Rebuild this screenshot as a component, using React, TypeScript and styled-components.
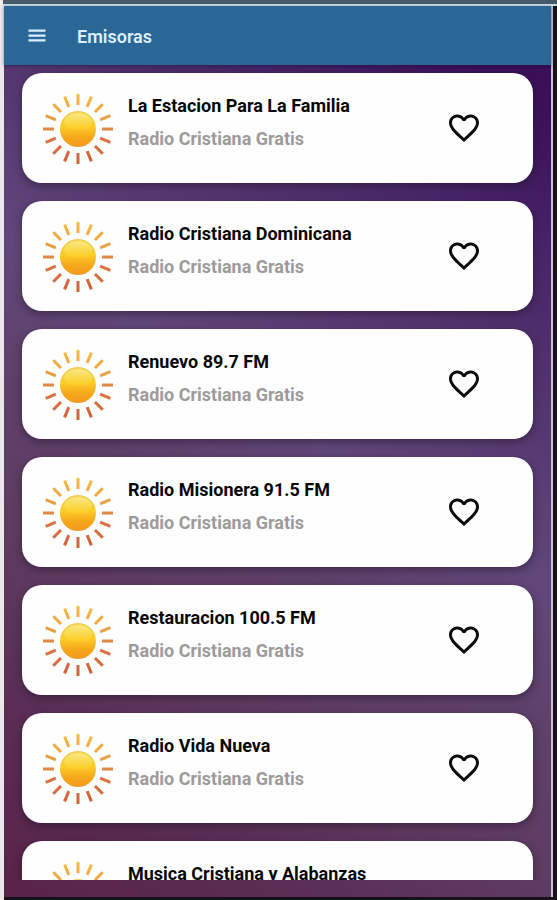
import React, { useState } from "react";
import styled, { createGlobalStyle } from "styled-components";

const GlobalStyle = createGlobalStyle`
  *, *::before, *::after { box-sizing: border-box; }
  body {
    margin: 0;
    background: #0c0710;
    font-family: Roboto, "Liberation Sans", sans-serif;
  }
`;

const Frame = styled.div`
  display: flex;
  flex-direction: column;
  height: 100vh;
  overflow: hidden;
  padding-bottom: 3px;
  background: linear-gradient(to right, #ebe8ec 4px, #141216 4px);
`;

const StatusBar = styled.div`
  flex: none;
  height: 6px;
  margin-left: 3px;
  background: #46596a;
  border-bottom: 2px solid #c9dbe6;
`;

const Screen = styled.div`
  flex: 1;
  min-height: 0;
  display: flex;
  flex-direction: column;
  margin: 0 4px;
  border-right: 2px solid #cdbdd0;
  background: linear-gradient(
    213deg,
    #390b55 0%,
    #3d1259 10%,
    #482468 20%,
    #54356f 32%,
    #61477a 47%,
    #5f4069 59%,
    #5f3c62 70%,
    #5a2e56 84%,
    #5a2348 100%
  );
`;

const Header = styled.header`
  flex: none;
  display: flex;
  align-items: center;
  gap: 27px;
  height: 59px;
  padding: 0 20px;
  background: #2b6796;
  box-shadow: 0 1px 3px rgba(20, 10, 50, 0.5);
  color: #dcefff;
`;

const IconButton = styled.button`
  display: flex;
  flex: none;
  padding: 0;
  border: 0;
  background: none;
  color: inherit;
  cursor: pointer;
`;

const Title = styled.h1`
  margin: 0;
  padding-top: 2px;
  font-size: 18px;
  line-height: 24px;
  font-weight: 600;
`;

const Main = styled.main`
  flex: 1;
  min-height: 0;
  overflow: hidden;
  margin-bottom: 17px;
`;

const StationList = styled.ul`
  display: flex;
  flex-direction: column;
  gap: 18px;
  margin: 0;
  padding: 8px 18px;
  list-style: none;
`;

const Card = styled.li`
  display: flex;
  align-items: center;
  gap: 14px;
  height: 110px;
  padding: 0 51px 0 20px;
  border-radius: 20px;
  background: #fefefe;
  box-shadow: 0 3px 8px rgba(30, 20, 40, 0.5);
  color: #0c0c0c;
`;

const StationText = styled.div`
  flex: 1;
  min-width: 0;
  align-self: flex-start;
  padding-top: 21px;
`;

const StationName = styled.h2`
  margin: 0 0 9px;
  font-size: 18px;
  line-height: 24px;
  font-weight: 700;
  color: #080808;
`;

const StationNote = styled.p`
  margin: 0;
  font-size: 18px;
  line-height: 24px;
  font-weight: 700;
  color: #9c9a9a;
`;

const SunSvg = styled.svg`
  flex: none;
  display: block;
`;

const RAYS = Array.from({ length: 16 }, (_, i) => i * 22.5);

function Sun({ id }: { id: string }) {
  return (
    <SunSvg width="72" height="74" viewBox="-36 -38 72 74" aria-hidden="true">
      <defs>
        <linearGradient id={`${id}-rays`} gradientUnits="userSpaceOnUse" x1="0" y1="-35" x2="0" y2="35">
          <stop offset="0" stopColor="#f2bd45" />
          <stop offset="0.4" stopColor="#e99a45" />
          <stop offset="0.6" stopColor="#dc7641" />
          <stop offset="1" stopColor="#cb6238" />
        </linearGradient>
        <linearGradient id={`${id}-ball`} x1="0" y1="0" x2="0" y2="1">
          <stop offset="0" stopColor="#f3cf55" />
          <stop offset="0.45" stopColor="#fbcb22" />
          <stop offset="0.75" stopColor="#f6a51a" />
          <stop offset="1" stopColor="#f39a22" />
        </linearGradient>
        <linearGradient id={`${id}-shine`} x1="0" y1="0" x2="0" y2="1">
          <stop offset="0" stopColor="#fff3a0" stopOpacity="0.7" />
          <stop offset="1" stopColor="#ffe24a" stopOpacity="0.1" />
        </linearGradient>
      </defs>
      <g fill="none" stroke={`url(#${id}-rays)`} strokeWidth="3">
        {RAYS.map((deg) => {
          const a = (deg * Math.PI) / 180;
          const x = Math.sin(a);
          const y = -Math.cos(a);
          return <path key={deg} d={`M${x * 24 - 0.01} ${y * 24 - 0.01}L${x * 35 + 0.01} ${y * 35 + 0.01}`} />;
        })}
      </g>
      <circle r="18" fill={`url(#${id}-ball)`} />
      <ellipse cy="-7" rx="14" ry="9" fill={`url(#${id}-shine)`} />
    </SunSvg>
  );
}

function MenuIcon() {
  return (
    <svg width="26" height="26" viewBox="0 0 26 26" fill="currentColor" aria-hidden="true">
      <path d="M4.5 6.5h17v2.3h-17zM4.5 11.4h17v2.3h-17zM4.5 16.3h17v2.3h-17z" />
    </svg>
  );
}

function HeartIcon({ filled }: { filled: boolean }) {
  const outline =
    "M16.5 3c-1.74 0-3.41.81-4.5 2.09C10.91 3.81 9.24 3 7.5 3 4.42 3 2 5.42 2 8.5c0 3.78 3.4 6.86 8.55 11.54L12 21.35l1.45-1.32C18.6 15.36 22 12.28 22 8.5 22 5.42 19.58 3 16.5 3z";
  const inner =
    "m-4.4 15.55l-.1.1-.1-.1C7.14 14.24 4 11.39 4 8.5 4 6.5 5.5 5 7.5 5c1.54 0 3.04.99 3.57 2.36h1.87C13.46 5.99 14.96 5 16.5 5c2 0 3.5 1.5 3.5 3.5 0 2.89-3.14 5.74-7.9 10.05z";
  return (
    <svg width="36" height="36" viewBox="0 0 24 24" fill="currentColor" aria-hidden="true">
      <path d={filled ? outline : outline + inner} />
    </svg>
  );
}

const STATIONS = [
  "La Estacion Para La Familia",
  "Radio Cristiana Dominicana",
  "Renuevo 89.7 FM",
  "Radio Misionera 91.5 FM",
  "Restauracion 100.5 FM",
  "Radio Vida Nueva",
  "Musica Cristiana y Alabanzas",
];

function StationCard({ name, index }: { name: string; index: number }) {
  const [favorite, setFavorite] = useState(false);
  return (
    <Card>
      <Sun id={`sun-${index}`} />
      <StationText>
        <StationName>{name}</StationName>
        <StationNote>Radio Cristiana Gratis</StationNote>
      </StationText>
      <IconButton
        type="button"
        aria-label={`Favorito: ${name}`}
        aria-pressed={favorite}
        onClick={() => setFavorite(!favorite)}
      >
        <HeartIcon filled={favorite} />
      </IconButton>
    </Card>
  );
}

export default function App() {
  return (
    <>
      <GlobalStyle />
      <Frame>
        <StatusBar />
        <Screen>
          <Header>
            <IconButton type="button" aria-label="Menú">
              <MenuIcon />
            </IconButton>
            <Title>Emisoras</Title>
          </Header>
          <Main>
            <StationList>
              {STATIONS.map((name, i) => (
                <StationCard key={name} name={name} index={i} />
              ))}
            </StationList>
          </Main>
        </Screen>
      </Frame>
    </>
  );
}
